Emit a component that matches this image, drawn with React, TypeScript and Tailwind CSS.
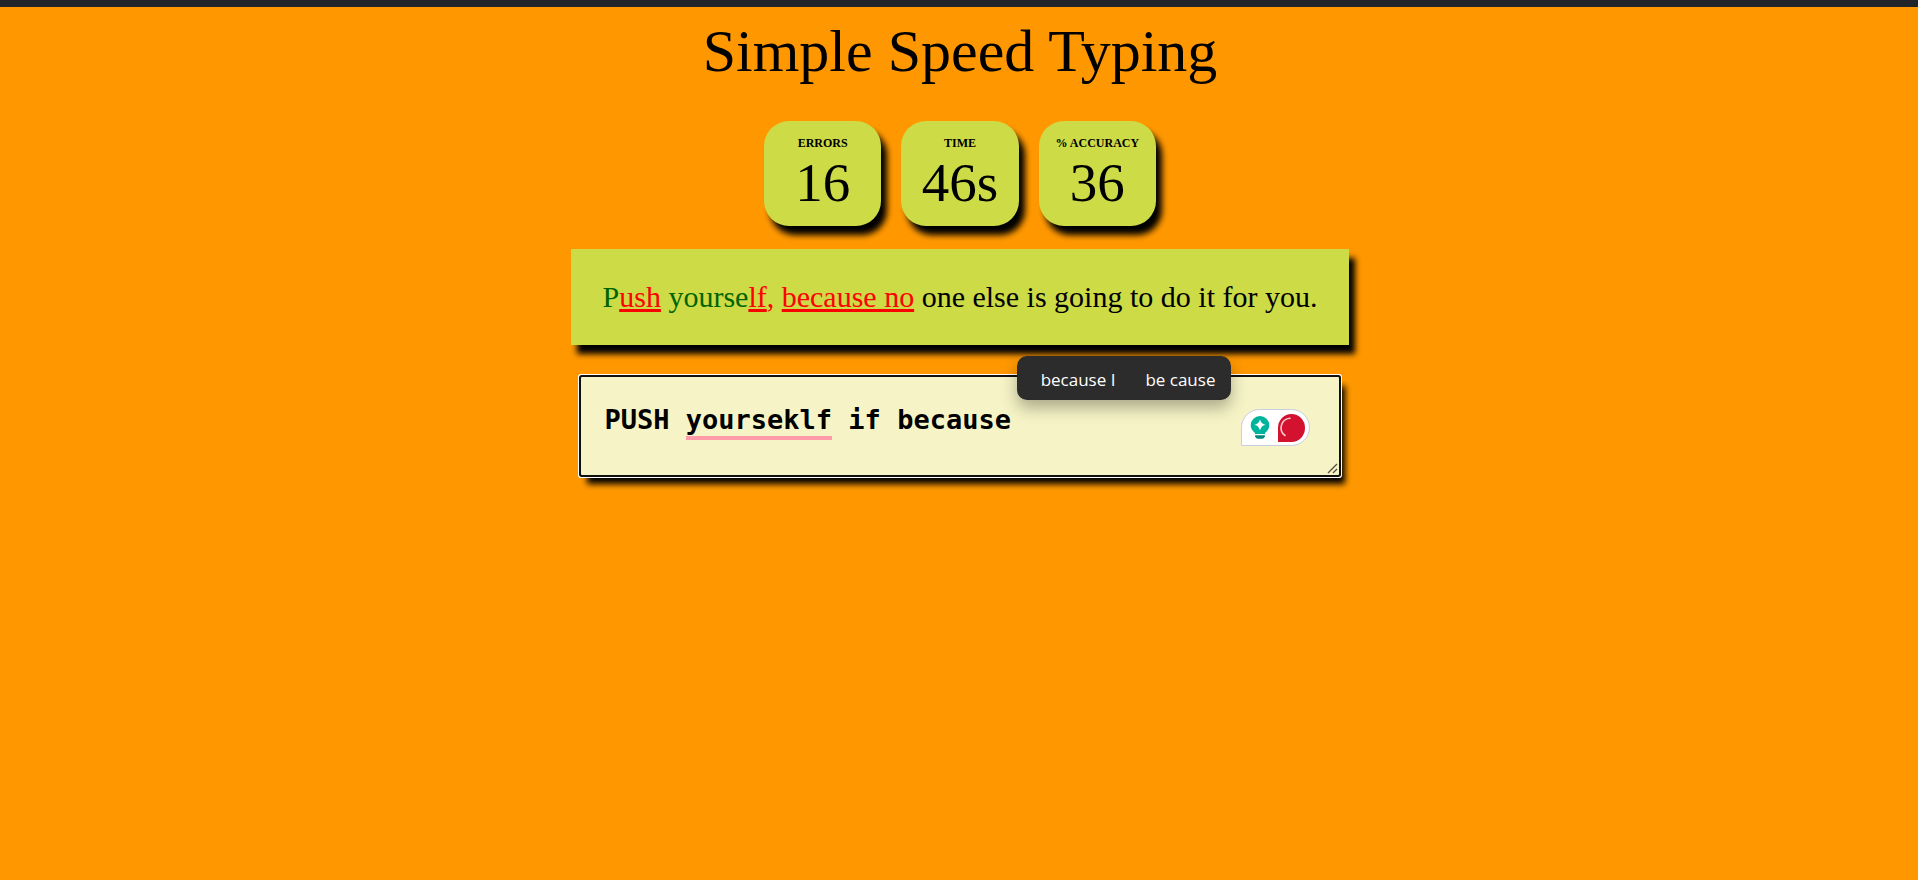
import { useState } from "react";

type Mark = "right" | "wrong" | "missed" | "todo";

const stats = [
  { label: "ERRORS", value: "16" },
  { label: "TIME", value: "46s" },
  { label: "% ACCURACY", value: "36" },
];

const quote: { text: string; mark: Mark }[] = [
  { text: "P", mark: "right" },
  { text: "ush", mark: "wrong" },
  { text: " yourse", mark: "right" },
  { text: "lf", mark: "wrong" },
  { text: ",", mark: "missed" },
  { text: " ", mark: "right" },
  { text: "because no", mark: "wrong" },
  { text: " one else is going to do it for you.", mark: "todo" },
];

const markClass: Record<Mark, string> = {
  right: "text-[#006400]",
  wrong: "text-[#ff0000] underline decoration-[3px] underline-offset-2",
  missed: "text-[#ff0000]",
  todo: "text-black",
};

function Stat({ label, value }: { label: string; value: string }) {
  return (
    <div className="flex flex-col items-center gap-1 rounded-[25px] bg-[#ccdb46] pt-[14px] pb-[15px] shadow-[6px_9px_6px_#000]">
      <dt className="text-[12px] leading-4 font-bold whitespace-nowrap">{label}</dt>
      <dd className="text-[55px] leading-[56px]">{value}</dd>
    </div>
  );
}

function Suggestions() {
  return (
    <div className="absolute -top-[21px] right-[108px] flex h-11 items-center gap-[30px] rounded-[10px] bg-[#2c2c2c] pt-1 pr-4 pl-6 font-['Open_Sans','Noto_Sans',sans-serif] text-[17px] font-normal whitespace-nowrap text-white shadow-[0_8px_16px_rgba(0,0,0,0.3)]">
      <button type="button">because I</button>
      <button type="button">be cause</button>
    </div>
  );
}

function Assistant() {
  return (
    <div className="absolute top-8 right-[29px] flex h-[37px] w-[69px] items-center justify-between rounded-full rounded-bl-[1px] border border-[#c9cde0] bg-white pr-1 pl-2">
      <button type="button" aria-label="Writing ideas">
        <svg width="20" height="23" viewBox="0 0 20 23" className="block">
          <path
            d="M10 0a9.3 9.3 0 0 1 9.3 9.2c0 3.300-1.700 5.700-4.300 7.700v1.100H5v-1.100C2.400 14.900.7 12.500.7 9.200A9.300 9.300 0 0 1 10 0Z"
            fill="#00b39b"
          />
          <path d="M5 19.300h10c0 2.200-1.200 3.500-3 3.500H8c-1.800 0-3-1.300-3-3.500Z" fill="#028a7a" />
          <path d="M10 3.200c1.100 3.400 2.200 4.500 5.600 5.600-3.400 1.100-4.500 2.200-5.600 5.600-1.100-3.400-2.200-4.500-5.600-5.600 3.400-1.100 4.500-2.200 5.600-5.600Z" fill="#fff" />
        </svg>
      </button>
      <button type="button" aria-label="Writing check">
        <svg width="27" height="28" viewBox="0 0 27 28" className="block">
          <path d="M13.500 0a13.500 14 0 0 1 0 28H0V14A13.500 14 0 0 1 13.500 0Z" fill="#d3122f" />
          <path d="M12 4.200A9.600 9.600 0 0 0 7 21.500" fill="none" stroke="#f9ccd2" strokeWidth="1.600" strokeLinecap="round" />
        </svg>
      </button>
    </div>
  );
}

function Grip() {
  return (
    <svg
      width="11"
      height="11"
      viewBox="0 0 11 11"
      className="pointer-events-none absolute right-px bottom-px"
      fill="none"
      stroke="#55543f"
      strokeWidth="1.400"
    >
      <path d="M1 10 10 1M6 10l4-4" />
    </svg>
  );
}

export default function App() {
  const [typed, setTyped] = useState("PUSH yourseklf if because");

  return (
    <div className="min-h-screen bg-[#ff9800] font-['Liberation_Serif',serif] text-black">
      <div className="h-[7px] bg-[#212529]" />
      <main className="flex flex-col items-center pt-2 pl-[2px]">
        <h1 className="text-[60px] leading-[72px]">Simple Speed Typing</h1>

        <dl className="mt-[34px] grid w-[392px] grid-cols-3 gap-5">
          {stats.map((s) => (
            <Stat key={s.label} label={s.label} value={s.value} />
          ))}
        </dl>

        <div className="mt-[23px] flex flex-col">
          <p className="bg-[#ccdb46] p-8 text-[30px] leading-8 shadow-[6px_9px_6px_#000]">
            {quote.map((part, i) => (
              <span key={i} className={markClass[part.mark]}>
                {part.text}
              </span>
            ))}
          </p>

          <div className="relative mx-[10px] mt-8 font-['DejaVu_Sans_Mono',monospace] text-[27px] leading-8 font-bold">
            <textarea
              aria-label="Type the quote"
              spellCheck={false}
              value={typed}
              onChange={(e) => setTyped(e.target.value)}
              className="block h-[98px] w-full resize-none rounded-[1px] bg-[#f6f4c6] px-6 pt-[27px] outline-none shadow-[0_0_0_2px_#101010,0_0_0_3px_#fff,6px_9px_6px_#000]"
            />
            <div className="pointer-events-none absolute top-[59px] left-[calc(24px+5ch)] h-1 w-[9ch] bg-[#ff9aa8]" />
            <Grip />
            <Assistant />
            <Suggestions />
          </div>
        </div>
      </main>
    </div>
  );
}
